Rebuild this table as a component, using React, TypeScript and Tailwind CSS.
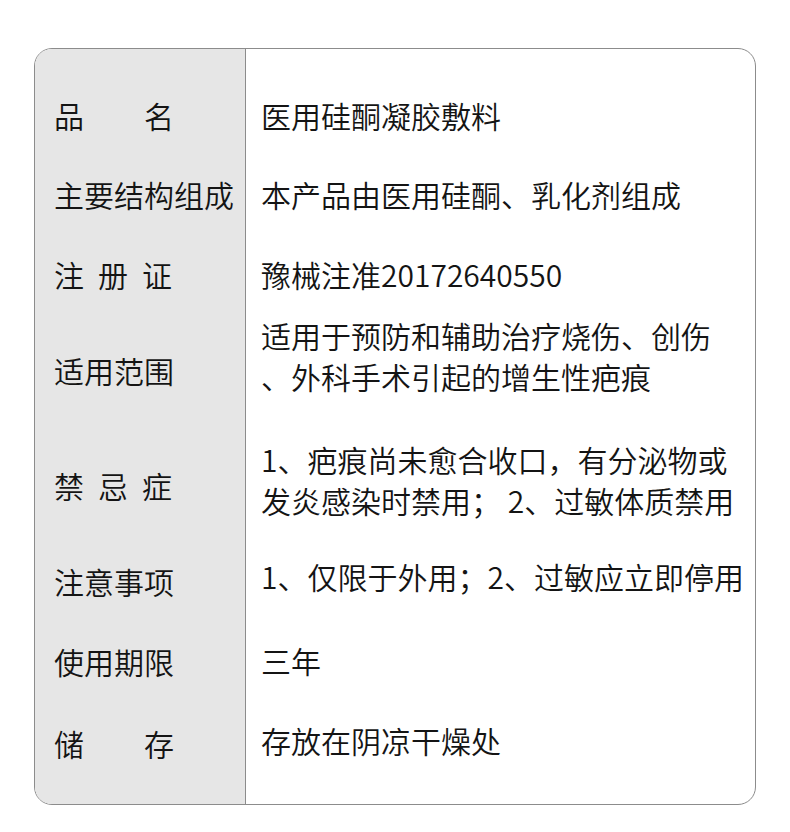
const rows = [
  { label: <span>品　　名</span>, h: "h-[80px]", pr: "", lines: ["医用硅酮凝胶敷料"] },
  { label: <span>主要结构组成</span>, h: "h-[79px]", pr: "", lines: ["本产品由医用硅酮、乳化剂组成"] },
  { label: <span className="tracking-[14px]">注册证</span>, h: "h-[80px]", pr: "", lines: ["豫械注准20172640550"] },
  { label: <span>适用范围</span>, h: "h-[112px]", pr: "pb-[29px]", lines: ["适用于预防和辅助治疗烧伤、创伤", "、外科手术引起的增生性疤痕"] },
  { label: <span className="tracking-[14px]">禁忌症</span>, h: "h-[118px]", pr: "pb-[10px]", lines: ["1、疤痕尚未愈合收口，有分泌物或", "发炎感染时禁用； 2、过敏体质禁用"] },
  { label: <span>注意事项</span>, h: "h-[74px]", pr: "pb-[10px]", lines: ["1、仅限于外用；2、过敏应立即停用"] },
  { label: <span>使用期限</span>, h: "h-[86px]", pr: "pb-[2px]", lines: ["三年"] },
  { label: <span>储　　存</span>, h: "h-[78px]", pr: "pb-[6px]", lines: ["存放在阴凉干燥处"] },
];

export default function App() {
  return (
    <div
      className="min-h-[832px] w-[790px] bg-white pt-[48px] pl-[34px] text-[30px] leading-[41px] font-[350] text-[#141414]"
      style={{ fontFamily: '"Noto Sans CJK SC", "Noto Sans", sans-serif' }}
    >
      <div className="flex h-[757px] w-[722px] overflow-hidden rounded-[18px] border border-[#8c8c8c]">
        {/* label column */}
        <div className="flex w-[211px] shrink-0 flex-col border-r border-[#8c8c8c] bg-[#e6e6e6] pt-[26px] pb-[22px] pl-[19px]">
          {rows.map((r, i) => (
            <div key={i} className={`flex items-center whitespace-nowrap ${r.h}`}>
              {r.label}
            </div>
          ))}
        </div>
        {/* value column */}
        <div className="flex flex-1 flex-col pt-[26px] pb-[22px] pl-[15px]">
          {rows.map((r, i) => (
            <div key={i} className={`flex flex-col justify-center whitespace-nowrap ${r.h} ${r.pr}`}>
              {r.lines.map((l, j) => (
                <div key={j}>{l}</div>
              ))}
            </div>
          ))}
        </div>
      </div>
    </div>
  );
}
